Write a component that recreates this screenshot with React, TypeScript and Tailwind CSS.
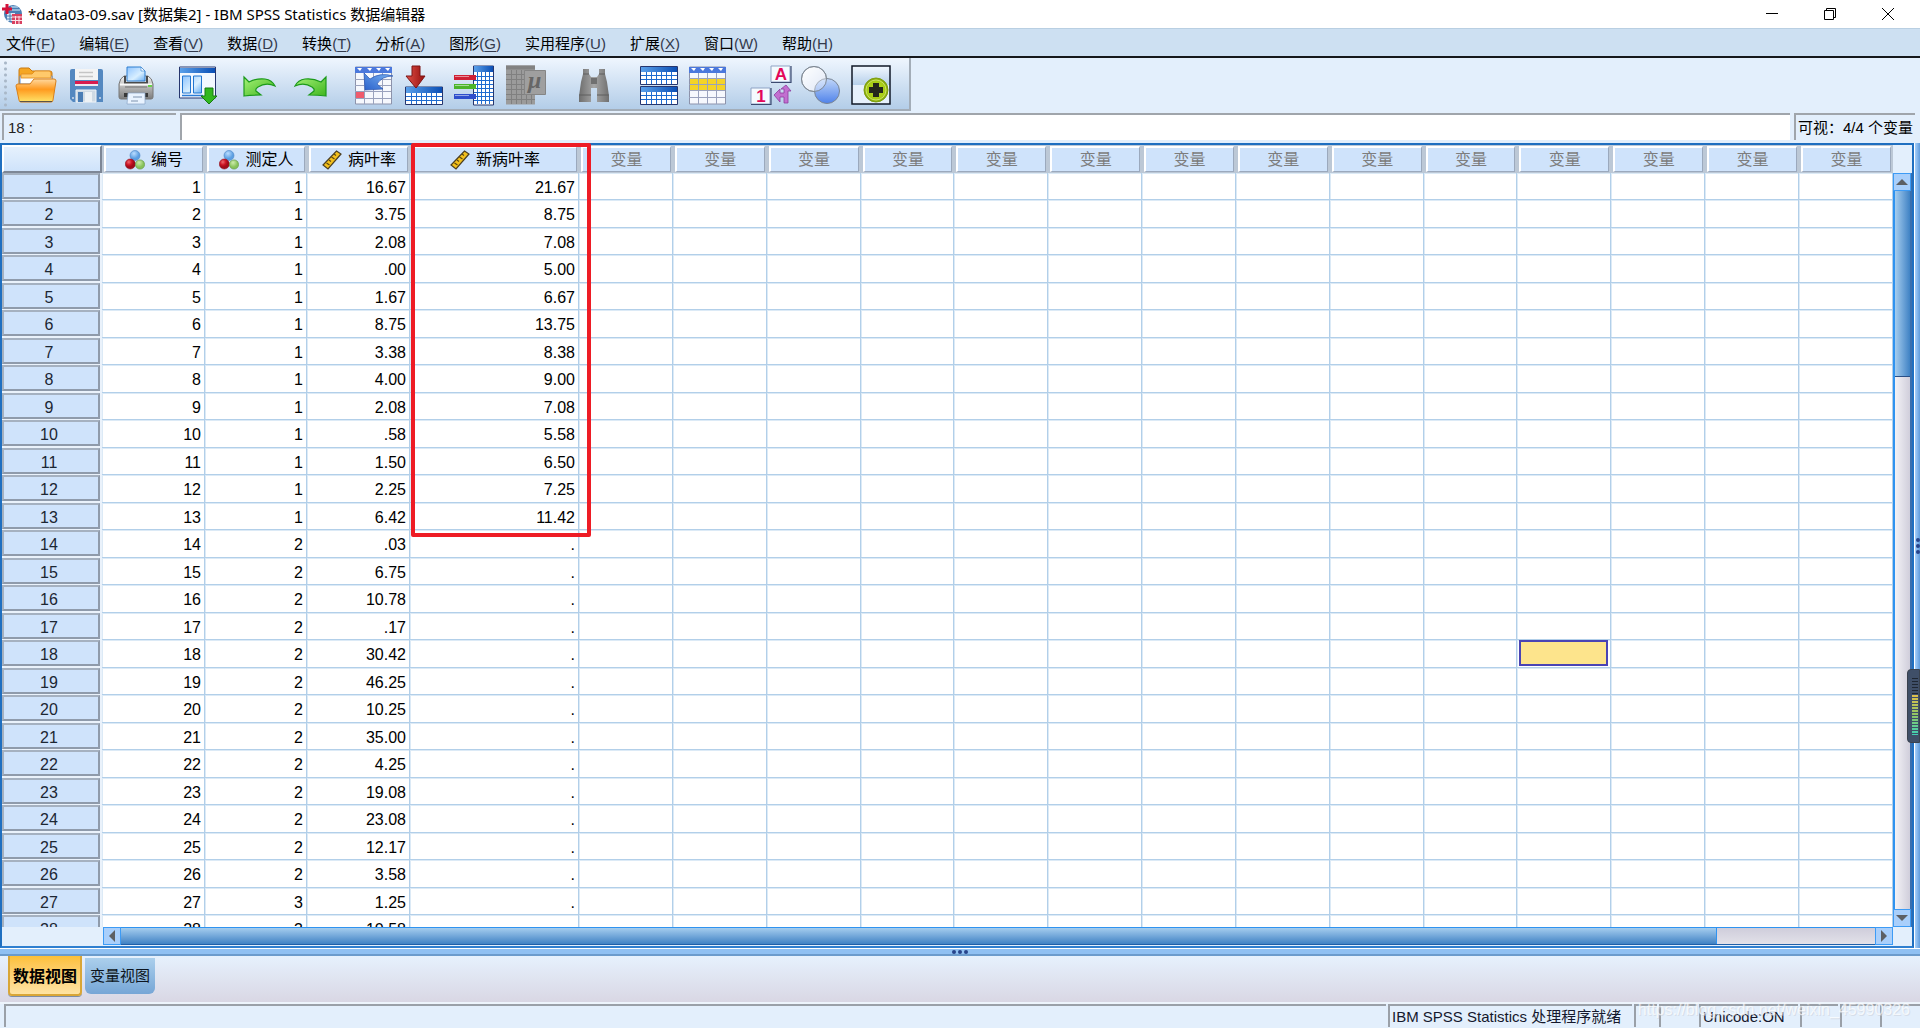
import type { ReactNode } from "react";
import { clsx } from "clsx";

type Row = [string, string, string];

const rows: Row[] = [
  ["1", "16.67", "21.67"],
  ["1", "3.75", "8.75"],
  ["1", "2.08", "7.08"],
  ["1", ".00", "5.00"],
  ["1", "1.67", "6.67"],
  ["1", "8.75", "13.75"],
  ["1", "3.38", "8.38"],
  ["1", "4.00", "9.00"],
  ["1", "2.08", "7.08"],
  ["1", ".58", "5.58"],
  ["1", "1.50", "6.50"],
  ["1", "2.25", "7.25"],
  ["1", "6.42", "11.42"],
  ["2", ".03", "."],
  ["2", "6.75", "."],
  ["2", "10.78", "."],
  ["2", ".17", "."],
  ["2", "30.42", "."],
  ["2", "46.25", "."],
  ["2", "10.25", "."],
  ["2", "35.00", "."],
  ["2", "4.25", "."],
  ["2", "19.08", "."],
  ["2", "23.08", "."],
  ["2", "12.17", "."],
  ["2", "3.58", "."],
  ["3", "1.25", "."],
  ["3", "10.58", "."],
];

const menus = [
  ["文件", "F"],
  ["编辑", "E"],
  ["查看", "V"],
  ["数据", "D"],
  ["转换", "T"],
  ["分析", "A"],
  ["图形", "G"],
  ["实用程序", "U"],
  ["扩展", "X"],
  ["窗口", "W"],
  ["帮助", "H"],
];

const EMPTY_COLUMNS = Array.from({ length: 14 }, (_, i) => i);
const SELECTED = { row: 17, column: 10 };

const Svg = ({ children }: { children: ReactNode }) => (
  <svg viewBox="0 0 42 42" className="h-[42px] w-[42px] overflow-visible" aria-hidden="true">
    {children}
  </svg>
);

const Gradients = () => (
  <svg width="0" height="0" className="absolute" aria-hidden="true">
    <defs>
      <linearGradient id="folder" x1="0" y1="0" x2="0" y2="1">
        <stop offset="0" stopColor="#ffd9a0" />
        <stop offset=".45" stopColor="#ff9a1f" />
        <stop offset="1" stopColor="#ffe469" />
      </linearGradient>
      <linearGradient id="blueBar" x1="0" y1="0" x2="1" y2="0">
        <stop offset="0" stopColor="#5aa0ea" />
        <stop offset="1" stopColor="#0b4fb5" />
      </linearGradient>
      <linearGradient id="paper" x1="0" y1="0" x2="1" y2="1">
        <stop offset="0" stopColor="#8fc4ff" />
        <stop offset=".6" stopColor="#d9efff" />
        <stop offset="1" stopColor="#6aaef2" />
      </linearGradient>
      <linearGradient id="green" x1="0" y1="0" x2="1" y2="1">
        <stop offset="0" stopColor="#a6f277" />
        <stop offset="1" stopColor="#3fb51e" />
      </linearGradient>
      <linearGradient id="metal" x1="0" y1="0" x2="0" y2="1">
        <stop offset="0" stopColor="#f4f4f4" />
        <stop offset=".5" stopColor="#b4b4b4" />
        <stop offset="1" stopColor="#7c7c7c" />
      </linearGradient>
      <linearGradient id="grey" x1="0" y1="0" x2="1" y2="0">
        <stop offset="0" stopColor="#6e6e6e" />
        <stop offset=".5" stopColor="#a6a6a6" />
        <stop offset="1" stopColor="#707070" />
      </linearGradient>
      <linearGradient id="redArrow" x1="0" y1="0" x2="1" y2="0">
        <stop offset="0" stopColor="#e05048" />
        <stop offset="1" stopColor="#96100f" />
      </linearGradient>
      <linearGradient id="blueArrow" x1="0" y1="1" x2="1" y2="0">
        <stop offset="0" stopColor="#2a62cc" />
        <stop offset="1" stopColor="#7db4f2" />
      </linearGradient>
      <linearGradient id="window" x1="0" y1="0" x2="0" y2="1">
        <stop offset="0" stopColor="#f2f8ff" />
        <stop offset=".5" stopColor="#b5cfea" />
        <stop offset=".51" stopColor="#e6f0fc" />
        <stop offset="1" stopColor="#e6f0fc" />
      </linearGradient>
      <linearGradient id="setWhite" x1="0" y1="0" x2="1" y2="1">
        <stop offset="0" stopColor="#ffffff" />
        <stop offset="1" stopColor="#cfdcf2" />
      </linearGradient>
      <linearGradient id="setBlue" x1="0" y1="0" x2="0" y2="1">
        <stop offset="0" stopColor="#c0d6f9" />
        <stop offset="1" stopColor="#4f82ea" />
      </linearGradient>
      <radialGradient id="lime">
        <stop offset="0" stopColor="#b5dc2a" />
        <stop offset=".75" stopColor="#a8cc14" />
        <stop offset="1" stopColor="#7d9c10" />
      </radialGradient>
      <radialGradient id="ballBlue" cx=".4" cy=".3">
        <stop offset="0" stopColor="#b9dcff" />
        <stop offset="1" stopColor="#5c9fe2" />
      </radialGradient>
      <radialGradient id="ballRed" cx=".35" cy=".3">
        <stop offset="0" stopColor="#ee6a70" />
        <stop offset=".6" stopColor="#cc1424" />
        <stop offset="1" stopColor="#a00c1a" />
      </radialGradient>
      <radialGradient id="ballGreen" cx=".4" cy=".3">
        <stop offset="0" stopColor="#cdebac" />
        <stop offset="1" stopColor="#86c25a" />
      </radialGradient>
    </defs>
  </svg>
);

const OpenIcon = () => (
  <Svg>
    <path d="M4 20V6q0-2 2-2h8l3 3h18q2 0 2 2v10z" fill="#f5a623" stroke="#c97a12" />
    <path d="M5 12h32v8H5z" fill="#fff" stroke="#5b8fdd" />
    <path d="M6 10h11l3-3h14q2 0 2 2v5H6z" fill="#ffc96b" stroke="#e08a1c" strokeWidth=".8" />
    <path d="M1 22q0-2 2-2h12l4-5h20q2 0 2 2l-3 19q0 2-2 2H6q-2 0-2-2z" fill="url(#folder)" stroke="#d9801a" />
    <path d="M5 37.500h32" stroke="#5c5348" />
  </Svg>
);

const SaveIcon = () => (
  <Svg>
    <path d="M5 7q0-2 2-2h29q2 0 2 2v31H8l-3-3z" fill="#5488c0" />
    <path d="M10 5h23v11H10z" fill="#f4f4f4" />
    <path d="M14 8.500h14M14 12.500h14" stroke="#c5c5c5" strokeWidth="1.500" />
    <path d="M10 17h23v3H10z" fill="#d81b4e" />
    <path d="M10 20h23v2H10z" fill="#f0e6ee" />
    <path d="M11 26h20v12H11z" fill="#cfdae4" stroke="#f0f4f8" />
    <path d="M13 28h5v10h-5z" fill="#4a7db5" />
    <path d="M20 28h7v10h-7z" fill="#eef2f5" />
    <circle cx="8" cy="34" r="1" fill="#d2dcec" />
    <circle cx="35" cy="34" r="1" fill="#d2dcec" />
  </Svg>
);

const PrintIcon = () => (
  <Svg>
    <path d="M9 12h24q4 2 5 8v13q0 2-2 2H6q-2 0-2-2V20q1-6 5-8z" fill="url(#metal)" stroke="#777" />
    <path d="M9 12h2v6h20v-6h2v8H9z" fill="#4a4a4a" />
    <path d="M12 17V3h14l4 4v10z" fill="url(#paper)" stroke="#2f7fd0" />
    <path d="M26 3v4h4z" fill="#fff" stroke="#2f7fd0" strokeWidth=".6" />
    <path d="M5 20.500h32" stroke="#f8f8f8" strokeWidth="2" />
    <path d="M10 23h22" stroke="#888" strokeWidth="1.500" />
    <path d="M33 21h4v2h-4z" fill="#69d24b" />
    <path d="M9 29h24v4H9z" fill="#393939" />
    <path d="M13 29h17v11H12z" fill="#e9f3ff" stroke="#8aa5c5" strokeWidth=".7" />
    <path d="M18 33h9M16 37h7" stroke="#7f93ae" />
  </Svg>
);

const RecallIcon = () => (
  <Svg>
    <path d="M2.500 3h36v31h-36z" fill="#f3f8ff" stroke="#26366e" />
    <path d="M3 4h35v5H3z" fill="url(#blueBar)" />
    <path d="M5.500 12h8v17h-8zM16.500 12h8v17h-8z" fill="url(#paper)" stroke="#2276d0" />
    <path d="M5 31.500h21" stroke="#2b7cd6" strokeWidth="1.500" />
    <path d="M28 24h8v8h4l-8 8-8-8h4z" fill="#32b81f" stroke="#177b12" />
  </Svg>
);

const UndoIcon = () => (
  <Svg>
    <path d="M5 13l5 5q8-4 16-3 7 1 10 7-9-4-17 1-3 2-2 4l5 4q-9 0-17 1z" fill="url(#green)" stroke="#1d9a1b" strokeWidth="1.200" />
  </Svg>
);

const RedoIcon = () => (
  <Svg>
    <path d="M37 13l-5 5q-8-4-16-3-7 1-10 7 9-4 17 1 3 2 2 4l-5 4q9 0 17 1z" fill="url(#green)" stroke="#1d9a1b" strokeWidth="1.200" />
  </Svg>
);

const GotoCaseIcon = () => (
  <Svg>
    <path d="M2.500 3h36v37h-36z" fill="#f6f8fd" stroke="#8d93ab" />
    <path d="M2 3h37v6H2z" fill="#4b78dc" />
    <path d="M4 4h5l-2 3zM14 4h5l-2 3zM23 4h5l-2 3zM32 4h5l-2 3z" fill="#fff" />
    <path d="M11.500 9v31M20.500 9v31M29.500 9v31M2 15.500h36M2 21.500h36M2 27.500h36M2 34.500h36" stroke="#9aa2bd" />
    <path d="M3 28h8v6H3z" fill="#ef5b6c" />
    <path d="M11 9l6 6q10-7 23-3-11 0-16 8l6 5-18 1z" fill="url(#blueArrow)" stroke="#2a55b0" strokeWidth=".7" />
  </Svg>
);

const GotoVarIcon = () => (
  <Svg>
    <path d="M2.500 23h37v17.500h-37z" fill="#fff" stroke="#26366e" />
    <path d="M3 23h36v6H3z" fill="url(#blueBar)" />
    <path d="M8.500 29v11M13.500 29v11M18.500 29v11M23.500 29v11M28.500 29v11M33.500 29v11M3 32.500h36M3 36.500h36" stroke="#1e6bd0" />
    <path d="M9 2h8v10h5l-9 12L3 12h6z" fill="url(#redArrow)" stroke="#7c1414" />
  </Svg>
);

const VariablesIcon = () => (
  <Svg>
    <path d="M20.500 2h20v39h-20z" fill="#fff" stroke="#26366e" />
    <path d="M21 2h19v6H21z" fill="url(#blueBar)" />
    <path d="M24.500 8v32M28.500 8v32M32.500 8v32M36.500 8v32M21 12.500h19M21 16.500h19M21 20.500h19M21 24.500h19M21 28.500h19M21 32.500h19M21 36.500h19" stroke="#1e6bd0" />
    <path d="M1 11h22v5H1z" fill="#cf2034" />
    <path d="M1 20h22v5H1z" fill="#4cb52a" />
    <path d="M1 30h22v5H1z" fill="#2f4fcc" />
    <path d="M2 12.500h14M2 21.500h14M2 31.500h14" stroke="#fff" strokeOpacity=".5" />
  </Svg>
);

const DescriptivesIcon = () => (
  <Svg>
    <path d="M3 1.500h29v39H3z" fill="#9b9b9b" />
    <path d="M3 1.500h29v4H3z" fill="#828282" />
    <path d="M8.500 6v34M13.500 6v34M18.500 6v34M23.500 6v34M28.500 6v34M3 10.500h29M3 15.500h29M3 20.500h29M3 25.500h29M3 30.500h29M3 35.500h29" stroke="#808080" />
    <path d="M21.500 6.500h21v24h-21z" fill="#9f9f9f" stroke="#858585" />
    <text x="25" y="24" fontFamily="Liberation Serif, serif" fontStyle="italic" fontWeight="700" fontSize="24" fill="#666">
      μ
    </text>
  </Svg>
);

const FindIcon = () => (
  <Svg>
    <path d="M10 5h6v5l2 3h6l2-3V5h6v5l2 8 2 14v6H24V24h-6v14H6v-6l2-14 2-8z" fill="url(#grey)" />
    <path d="M10 10h6M26 10h6M6 31h12M24 31h12" stroke="#5f5f5f" />
    <path d="M18 14h6v6h-6z" fill="#707070" />
  </Svg>
);

const SplitIcon = () => (
  <Svg>
    {[2, 22].map((y) => (
      <g key={y} transform={`translate(0 ${y})`}>
        <path d="M1.500.5h37v18h-37z" fill="#fff" stroke="#26366e" />
        <path d="M2 1h36v5H2z" fill="url(#blueBar)" />
        <path d="M7.500 6v12M12.500 6v12M17.500 6v12M22.500 6v12M27.500 6v12M32.500 6v12M2 9.500h36M2 13.500h36" stroke="#1e6bd0" />
      </g>
    ))}
  </Svg>
);

const SelectIcon = () => (
  <Svg>
    <path d="M.5 3h36v37H.5z" fill="#f6f8fd" stroke="#8d93ab" />
    <path d="M0 3h37v6H0z" fill="#4b78dc" />
    <path d="M2 4h5l-2 3zM11 4h5l-2 3zM20 4h5l-2 3zM29 4h5l-2 3z" fill="#fff" />
    <path d="M1 14h35v12H1z" fill="#f5d327" />
    <path d="M9.500 9v31M18.500 9v31M27.500 9v31M0 14.500h36M0 20.500h36M0 26.500h36M0 33.500h36" stroke="#9aa2bd" />
  </Svg>
);

const LabelsIcon = () => (
  <Svg>
    <path d="M20 2h19v16H20zM0 24h19v16H0z" fill="#f5faff" stroke="#8fa3c4" />
    <path d="M20 18.500h20V2M0 40.500h20V24" fill="none" stroke="#3b4a70" strokeWidth="1.200" />
    <g fontFamily="Liberation Sans, sans-serif" fontWeight="700" fontSize="17" fill="#e3075a" textAnchor="middle">
      <text x="30" y="16">A</text>
      <text x="10" y="38">1</text>
    </g>
    <path d="M35 21l5 6h-3v12h-4v-6h-4v5l-6-7 6-6v4h4v-4h-3z" fill="#c26fd0" stroke="#8d3c9e" strokeWidth=".8" />
  </Svg>
);

const SetsIcon = () => (
  <Svg>
    <circle cx="13" cy="15" r="12.500" fill="url(#setWhite)" stroke="#7e8894" />
    <circle cx="26" cy="27" r="12.500" fill="url(#setBlue)" stroke="#7a8594" />
    <circle cx="13" cy="15" r="12.500" fill="#fff" fillOpacity=".35" stroke="#7e8894" />
  </Svg>
);

const CustomIcon = () => (
  <Svg>
    <path d="M1 2h38v38H1z" fill="url(#window)" stroke="#111827" strokeWidth="1.500" />
    <circle cx="25" cy="26" r="12" fill="url(#lime)" stroke="#7fa010" />
    <circle cx="25" cy="26" r="10" fill="none" stroke="#d6ec7a" strokeWidth=".8" />
    <path d="M22 19h6v4h4v6h-4v4h-6v-4h-4v-6h4z" fill="#26281c" />
  </Svg>
);

const NominalIcon = () => (
  <svg viewBox="0 0 20 20" className="h-5 w-5" aria-hidden="true">
    <circle cx="10" cy="5.500" r="5" fill="url(#ballBlue)" stroke="#4d84c4" strokeWidth=".6" />
    <circle cx="5.300" cy="14" r="5" fill="url(#ballRed)" stroke="#8e1220" strokeWidth=".6" />
    <circle cx="15" cy="14.500" r="4.600" fill="url(#ballGreen)" stroke="#5f9440" strokeWidth=".6" />
  </svg>
);

const ScaleIcon = () => (
  <svg viewBox="0 0 20 20" className="h-5 w-5" aria-hidden="true">
    <path d="M14.500 1l4.500 3L6 19l-5-4z" fill="#f3c01c" stroke="#4b3f22" strokeWidth="1.200" />
    <path d="M12 4l2 1.500M9.500 7l3 2M7 10l2 1.500M4.500 13l3 2" stroke="#5a4512" strokeWidth="1.100" />
  </svg>
);

const AppIcon = () => (
  <svg viewBox="0 0 20 20" className="h-5 w-5" aria-hidden="true">
    <circle cx="11" cy="10" r="9" fill="#4b7fb4" />
    <path d="M9 3h7M8 6h10" stroke="#a9cbe6" strokeWidth="1.500" />
    <path d="M5 9h8v8H5z" fill="#dcebf7" />
    <path d="M8 9v8M5 12h8M5 15h7" stroke="#4b7fb4" />
    <path d="M5 0v10M0 5h10" stroke="#d4123a" strokeWidth="3" />
    <path d="M10 10h10v10H10z" fill="#d8405f" />
    <path d="M10 13h10M10 16.500h10M13.500 12v8M17 12v8" stroke="#fbe3e8" />
  </svg>
);

const toolGroups = [
  {
    gap: "",
    tools: [
      ["打开", OpenIcon],
      ["保存", SaveIcon],
      ["打印", PrintIcon],
    ],
  },
  { gap: "ml-3", tools: [["重新调用", RecallIcon]] },
  {
    gap: "ml-3",
    tools: [
      ["撤销", UndoIcon],
      ["重做", RedoIcon],
    ],
  },
  {
    gap: "ml-3.5",
    tools: [
      ["转到个案", GotoCaseIcon],
      ["转到变量", GotoVarIcon],
      ["变量", VariablesIcon],
      ["描述统计", DescriptivesIcon],
    ],
  },
  { gap: "ml-5", tools: [["查找", FindIcon]] },
  {
    gap: "ml-4",
    tools: [
      ["拆分文件", SplitIcon],
      ["选择个案", SelectIcon],
    ],
  },
  {
    gap: "ml-3",
    tools: [
      ["值标签", LabelsIcon],
      ["使用变量集", SetsIcon],
      ["定制", CustomIcon],
    ],
  },
] as { gap: string; tools: [string, () => ReactNode][] }[];

const TitleBar = () => (
  <header className="flex h-[29px] items-center bg-white pl-0.5">
    <AppIcon />
    <h1 className="ml-1.5 grow font-['Noto_Sans','Noto_Sans_CJK_SC',sans-serif] text-[15px] leading-6 text-black">
      *data03-09.sav [数据集2] - IBM SPSS Statistics 数据编辑器
    </h1>
    <button type="button" aria-label="最小化" className="flex w-[58px] justify-center">
      <svg width="12" height="12" stroke="#000">
        <path d="M0 5.500h12" />
      </svg>
    </button>
    <button type="button" aria-label="还原" className="flex w-[58px] justify-center">
      <svg width="12" height="12" fill="none" stroke="#000">
        <path d="M.5 2.500h9v9h-9zM2.500 2.500v-2h9v9h-2" />
      </svg>
    </button>
    <button type="button" aria-label="关闭" className="mr-[3px] flex w-[58px] justify-center">
      <svg width="12" height="12" stroke="#000">
        <path d="M0 0l12 12M12 0L0 12" />
      </svg>
    </button>
  </header>
);

const MenuBar = () => (
  <nav className="flex h-[30px] items-center gap-6 border-t border-b-2 border-t-[#b9cfe2] border-b-[#15181c] bg-[#cde0f2] pt-1 pl-1.5 text-[15px]">
    {menus.map(([label, key]) => (
      <button key={key} type="button" className="whitespace-nowrap">
        {label}
        <span className="text-[#333a4c]">
          (<u className="underline-offset-2">{key}</u>)
        </span>
      </button>
    ))}
  </nav>
);

const ToolBar = () => (
  <div className="flex">
    <div className="flex h-[53px] items-center border-r-2 border-b-2 border-[#a3adb8] bg-linear-to-b from-[#eff6fe] to-[#b3cde8] pt-0.5 pr-3 pl-1">
      <span className="mr-1 h-full w-[3px] bg-[radial-gradient(circle,#a9b8c8_1px,transparent_2px)] bg-[length:3px_6px]" />
      {toolGroups.map(({ gap, tools }, i) => (
        <div key={i} className={clsx("flex", gap)}>
          {tools.map(([label, Icon]) => (
            <button key={label} type="button" aria-label={label} className="flex w-[50px] justify-center">
              <Icon />
            </button>
          ))}
        </div>
      ))}
    </div>
  </div>
);

const CellEditor = () => (
  <div className="flex h-8 gap-1 pt-0.5 pr-[5px] pb-[3px] pl-0.5 text-[15px]">
    <label
      htmlFor="cell"
      className="flex w-[174px] items-center border-t-2 border-l-2 border-[#a0a5ab] pt-0.5 pl-1 text-[#222]"
    >
      18 :
    </label>
    <input id="cell" type="text" className="min-w-0 grow border-t-2 border-l-2 border-[#a0a5ab] bg-white px-1" />
    <p className="flex items-center border-t-2 border-l-2 border-[#a0a5ab] px-0.5 pt-0.5 whitespace-nowrap text-black">
      可视：4/4 个变量
    </p>
  </div>
);

const HeadCell = ({ children, muted }: { children: ReactNode; muted?: boolean }) => (
  <th scope="col" className="h-7 bg-[#bcc8d6] pt-px pr-0.5 pb-px pl-0.5 font-normal">
    <div
      className={clsx(
        "flex h-[26px] items-center justify-center gap-1.5 overflow-hidden border-t-2 border-r border-b border-l-2 border-t-white border-r-[#9ba9bd] border-b-[#9ba9bd] border-l-white bg-[#cfe3fb] pt-0.5 whitespace-nowrap",
        muted ? "text-[#7d7d7d]" : "text-black"
      )}
    >
      {children}
    </div>
  </th>
);

const lineClass =
  "overflow-hidden border-r border-b border-r-[#b2cfe9] border-b-[#b2cfe9] p-0 shadow-[inset_1px_1px_0_#dceaf6]";
const cellClass = clsx(lineClass, "pt-1 pr-[3px] text-right align-top leading-[22px]");

const DataTable = () => (
  <table className="w-full table-fixed border-separate border-spacing-0 text-base">
    <colgroup>
      <col className="w-[100px]" />
      <col className="w-[103px]" />
      <col className="w-[102px]" />
      <col className="w-[103px]" />
      <col className="w-[169px]" />
      {EMPTY_COLUMNS.map((c) => (
        <col key={c} />
      ))}
    </colgroup>
    <thead>
      <tr>
        <td className="border-2 border-t-white border-r-[#7d8796] border-b-[#7d8796] border-l-white bg-linear-to-b from-[#e6f1fd] to-[#cfe3fb] p-0" />
        <HeadCell>
          <NominalIcon />
          编号
        </HeadCell>
        <HeadCell>
          <NominalIcon />
          测定人
        </HeadCell>
        <HeadCell>
          <ScaleIcon />
          病叶率
        </HeadCell>
        <HeadCell>
          <ScaleIcon />
          新病叶率
        </HeadCell>
        {EMPTY_COLUMNS.map((c) => (
          <HeadCell key={c} muted>
            变量
          </HeadCell>
        ))}
      </tr>
    </thead>
    <tbody>
      {rows.map(([person, rate, newRate], r) => (
        <tr key={r} className="odd:h-[27px] even:h-7">
          <th scope="row" className="bg-[#eaf2fb] p-0 pr-0.5 pb-px align-top font-normal text-[#1c2733]">
            <div className="h-[26px] border-2 border-t-[#a5b1c0] border-r-[#8f9bab] border-b-[#8f9bab] border-l-[#a5b1c0] bg-[#cfe3fb] pr-1 leading-[26px]">
              {r + 1}
            </div>
          </th>
          <td className={cellClass}>{r + 1}</td>
          <td className={cellClass}>{person}</td>
          <td className={cellClass}>{rate}</td>
          <td className={cellClass}>{newRate}</td>
          {EMPTY_COLUMNS.map((c) => (
            <td key={c} className={lineClass}>
              {r === SELECTED.row && c === SELECTED.column && (
                <div className="mx-0.5 h-[26px] border-2 border-[#4a44b4] bg-[#fde48c]" />
              )}
            </td>
          ))}
        </tr>
      ))}
    </tbody>
  </table>
);

const Arrow = ({ d }: { d: string }) => (
  <svg viewBox="0 0 12 12" className="h-3 w-3" aria-hidden="true">
    <path d={d} fill="#5d5f63" />
  </svg>
);

const scrollButton = "flex h-[18px] w-[18px] shrink-0 items-center justify-center border border-[#3d9bf5] bg-[#a9cffb]";

const VerticalScroll = () => (
  <div className="flex w-[19px] shrink-0 flex-col bg-[#e3effc] pt-7">
    <div className="flex min-h-0 grow flex-col border-r-2 border-l-2 border-l-[#2f93f0] border-r-[#3a6fae]">
      <button type="button" aria-label="向上滚动" className={clsx(scrollButton, "-ml-0.5")}>
        <Arrow d="M0 9l6-6 6 6z" />
      </button>
      <div className="min-h-0 grow bg-linear-to-r from-[#f3f2f6] to-[#d0cedb]">
        <div className="h-[26%] border-b border-[#2a4f86] bg-linear-to-r from-[#a5cdee] to-[#3f82c4]" />
      </div>
      <button type="button" aria-label="向下滚动" className={clsx(scrollButton, "-ml-0.5")}>
        <Arrow d="M0 3l6 6 6-6z" />
      </button>
    </div>
  </div>
);

const HorizontalScroll = () => (
  <div className="flex h-[19px] shrink-0 pr-[19px] pb-px pl-[101px]">
    <button type="button" aria-label="向左滚动" className={scrollButton}>
      <Arrow d="M9 0L3 6l6 6z" />
    </button>
    <div className="min-w-0 grow border-t border-b border-t-[#2f93f0] border-b-[#1f5fa8] bg-linear-to-b from-[#cfcddb] to-[#e2e1e9]">
      <div className="h-full w-[91%] border-r border-[#2f93f0] bg-linear-to-b from-[#a5cdee] to-[#3f82c4]" />
    </div>
    <button type="button" aria-label="向右滚动" className={scrollButton}>
      <Arrow d="M3 0l6 6-6 6z" />
    </button>
  </div>
);

const ViewTabs = () => (
  <div className="flex h-[46px] shrink-0 items-start gap-[3px] bg-linear-to-b from-[#e6f1fd] to-[#d9d7e4] pl-2">
    <button
      type="button"
      className="h-10 w-[74px] rounded-b border-2 border-t-0 border-[#d9a636] bg-linear-to-b from-[#fdc037] to-[#fee3a2] pt-1 text-base font-bold whitespace-nowrap text-black shadow-[0_1px_0_#7f8ea3]"
    >
      数据视图
    </button>
    <button
      type="button"
      className="mt-0.5 h-9 w-[70px] rounded-b-md bg-linear-to-b from-[#abcfec] to-[#76a6d6] text-[15px] whitespace-nowrap text-[#0d1520]"
    >
      变量视图
    </button>
  </div>
);

const statusCell = "flex h-[23px] items-center border-t-2 border-l-2 border-[#9aa0a8] pt-0.5 pl-0.5 whitespace-nowrap";

const StatusBar = () => (
  <footer className="relative flex h-[26px] shrink-0 gap-0.5 border-t-2 border-[#edf4fc] pl-1 text-[15px] text-[#15182c]">
    <div className={clsx(statusCell, "grow")} />
    <div className={clsx(statusCell, "w-[244px]")}>IBM SPSS Statistics 处理程序就绪</div>
    <div className={clsx(statusCell, "w-[23px]")} />
    <div className={clsx(statusCell, "w-[38px]")} />
    <div className={clsx(statusCell, "w-[99px]")}>Unicode:ON</div>
    <div className={clsx(statusCell, "w-[38px]")} />
    <div className={clsx(statusCell, "w-[38px]")} />
    <div className={clsx(statusCell, "w-[40px]")} />
    <p className="absolute right-2.5 -top-1.5 text-base leading-6 text-white/70 [text-shadow:1px_1px_0_#c9ced680]">
      https://blog.csdn.net/weixin_45990326
    </p>
  </footer>
);

const SideHandle = () => (
  <div className="relative w-1.5 shrink-0 border-l border-white bg-linear-to-r from-[#a6d0fb] to-[#5f9bdc]">
    <div className="absolute top-[395px] right-0 flex flex-col gap-0.5">
      <i className="h-1 w-1 rounded-full bg-[#27448c]" />
      <i className="h-1 w-1 rounded-full bg-[#27448c]" />
      <i className="h-1 w-1 rounded-full bg-[#27448c]" />
    </div>
    <div className="absolute top-[526px] right-0 h-[74px] w-[13px] rounded-l border border-[#3a424e] bg-[#3f4f68] px-1 pt-2">
      <div className="h-[17px] w-1.5 bg-[repeating-linear-gradient(#1f2733_0_1px,#3f4f68_1px_3px)]" />
      <div className="h-10 w-1.5 bg-[repeating-linear-gradient(transparent_0_2px,#3f4f68_2px_3px),linear-gradient(#e0c04a,#8fc765,#3fd0b5)]" />
    </div>
  </div>
);

const App = () => {
  return (
    <div className="flex h-screen flex-col overflow-hidden bg-[#e3effc] font-['Liberation_Sans','Noto_Sans_CJK_SC',sans-serif] text-black">
      <Gradients />
      <TitleBar />
      <MenuBar />
      <ToolBar />
      <CellEditor />
      <div className="flex min-h-0 grow">
        <div className="relative flex min-w-0 grow flex-col border-2 border-t-[#1f6fc0] border-r-[#1f6fc0] border-b-[#2f7fd0] border-l-[#1f6fc0]">
          <div className="flex min-h-0 grow">
            <div className="min-w-0 grow overflow-hidden bg-white">
              <DataTable />
            </div>
            <VerticalScroll />
          </div>
          <HorizontalScroll />
          <div className="pointer-events-none absolute -top-0.5 left-[409px] h-[394px] w-[180px] rounded-xs border-4 border-[#ee1c25]" />
        </div>
        <SideHandle />
      </div>
      <div className="flex h-2 shrink-0 items-center justify-center gap-0.5 border-t border-b-2 border-t-white border-b-[#6b9bcc] bg-[#8fc0f2]">
        <i className="h-1 w-1 rounded-full bg-[#27448c]" />
        <i className="h-1 w-1 rounded-full bg-[#27448c]" />
        <i className="h-1 w-1 rounded-full bg-[#27448c]" />
      </div>
      <ViewTabs />
      <StatusBar />
    </div>
  );
};

export default App;
